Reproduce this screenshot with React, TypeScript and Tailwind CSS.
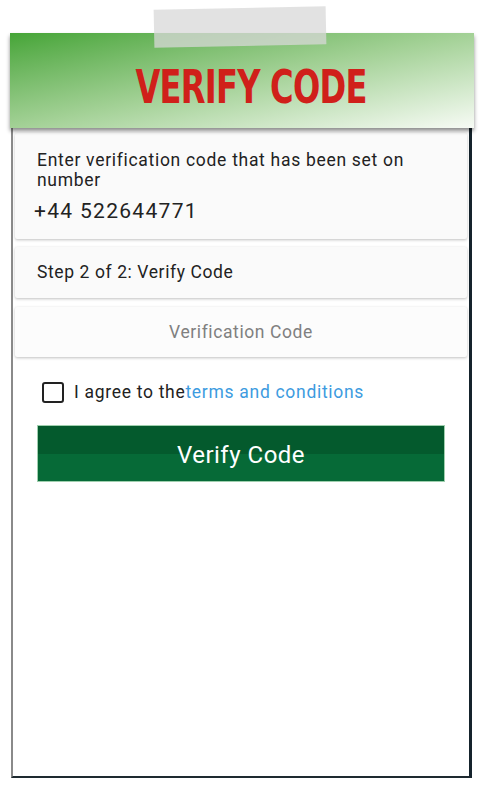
import React from "react";

export default function App() {
  return (
    <div className="relative w-[480px] h-[800px] bg-white overflow-hidden" style={{ fontFamily: "Roboto, 'Noto Sans', sans-serif" }}>
      {/* header */}
      <div className="relative ml-[10px] mt-[33px] w-[464px] h-[95px] bg-gradient-to-br from-[#45a536] via-[#a3d196] to-[#f7fbf5] shadow-[0_3px_4px_rgba(0,0,0,0.45)] z-10 flex items-center justify-center">
        <span
          className="text-[#d0201a] font-bold text-[47px] leading-none tracking-[-1px] mt-[12px] ml-[18px] scale-x-[0.76]"
          style={{ fontFamily: "'DejaVu Sans Condensed', 'Liberation Sans', sans-serif" }}
        >
          VERIFY CODE
        </span>
      </div>
      {/* tape */}
      <div className="absolute left-[154px] top-[8px] w-[172px] h-[38px] bg-[#d8d8d8]/75 -rotate-[1.2deg] z-20" />

      {/* frame */}
      <div className="ml-[11px] w-[461px] h-[650px] bg-white border-l-2 border-l-[#8a8a8a] border-r-[3px] border-r-[#15232c] border-b-2 border-b-[#1e2a30] px-[2px] pt-[5px] flex flex-col">
        <div className="h-[106px] bg-[#fafafa] shadow-[0_1px_3px_rgba(0,0,0,0.25)] rounded-[2px] pl-[22px] pr-[10px] pt-[17px] text-[#222]">
          <div className="text-[17.5px] leading-[20px] tracking-[0.7px]">Enter verification code that has been set on number</div>
          <div className="text-[21px] leading-[24px] mt-[9px] -ml-[3px] tracking-[1.3px]">+44 522644771</div>
        </div>
        <div className="mt-[8px] h-[51px] bg-[#fafafa] shadow-[0_1px_3px_rgba(0,0,0,0.25)] rounded-[2px] pl-[22px] flex items-center text-[17.5px] tracking-[0.6px] text-[#222]">
          Step 2 of 2: Verify Code
        </div>
        <div className="mt-[9px] h-[50px] bg-[#fcfcfc] shadow-[0_1px_3px_rgba(0,0,0,0.25)] rounded-[2px] flex items-center justify-center text-[17.5px] tracking-[0.6px] text-[#808080]">
          Verification Code
        </div>
        <div className="mt-[24px] ml-[27px] flex items-center h-[22px]">
          <div className="w-[22px] h-[21px] border-2 border-[#222] rounded-[3px] bg-white" />
          <span className="ml-[10px] text-[17.5px] tracking-[0.7px] text-[#222]">
            I agree to the<span className="text-[#3d9be0]">terms and conditions</span>
          </span>
        </div>
        <div className="mt-[22px] ml-[22px] w-[408px] h-[57px] border border-[#9fcfae] flex flex-col relative">
          <div className="h-[28px] bg-[#045a2d]" />
          <div className="flex-1 bg-[#066a37]" />
          <div className="absolute inset-0 flex items-center justify-center text-white text-[24px] tracking-[0.5px] pt-[2px]">Verify Code</div>
        </div>
      </div>
    </div>
  );
}
